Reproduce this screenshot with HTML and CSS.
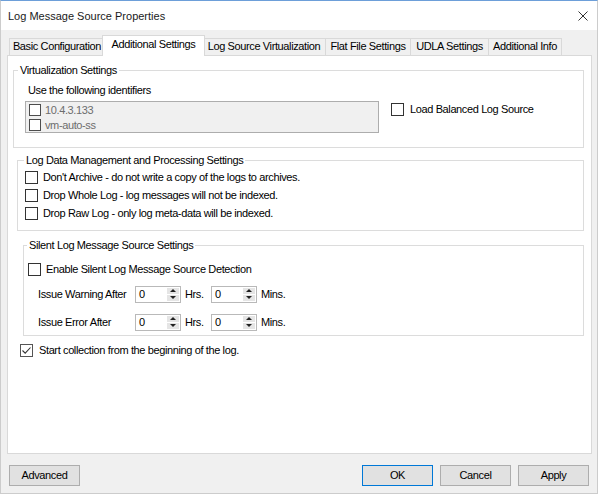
FILE: index.html
```html
<!DOCTYPE html>
<html>
<head>
<meta charset="utf-8">
<title>Log Message Source Properties</title>
<link rel="stylesheet" href="styles.css">
</head>
<body>
<div class="window">
  <div class="titlebar">
    <span class="title">Log Message Source Properties</span>
    <svg class="close" viewBox="0 0 10 10" width="10" height="10"><path d="M0.5 0.5 L9.5 9.5 M9.5 0.5 L0.5 9.5" stroke="#333" stroke-width="1" fill="none"/></svg>
  </div>
  <div class="tabs">
    <div class="tab tab-basic">Basic Configuration</div>
    <div class="tab tab-additional active">Additional Settings</div>
    <div class="tab tab-virt">Log Source Virtualization</div>
    <div class="tab tab-flat">Flat File Settings</div>
    <div class="tab tab-udla">UDLA Settings</div>
    <div class="tab tab-info">Additional Info</div>
  </div>
  <div class="panel">
    <div class="group g1">
      <div class="group-title">Virtualization Settings</div>
      <div class="g1-body">
        <div class="ident">
          <div class="ident-label">Use the following identifiers</div>
          <div class="listbox">
            <div class="item"><span class="cb-s"></span>10.4.3.133</div>
            <div class="item"><span class="cb-s"></span>vm-auto-ss</div>
          </div>
        </div>
        <div class="row lb"><span class="cb"></span><span class="lb-text">Load Balanced Log Source</span></div>
      </div>
    </div>
    <div class="group g2">
      <div class="group-title">Log Data Management and Processing Settings</div>
      <div class="rows">
        <div class="row"><span class="cb"></span>Don't Archive - do not write a copy of the logs to archives.</div>
        <div class="row"><span class="cb"></span>Drop Whole Log - log messages will not be indexed.</div>
        <div class="row"><span class="cb"></span>Drop Raw Log - only log meta-data will be indexed.</div>
      </div>
    </div>
    <div class="group g3">
      <div class="group-title">Silent Log Message Source Settings</div>
      <div class="row enable"><span class="cb"></span>Enable Silent Log Message Source Detection</div>
      <div class="spinrow first">
        <span class="spin-label">Issue Warning After</span>
        <div class="spin"><span class="spin-val">0</span><span class="spin-btns"><span class="up"></span><span class="down"></span></span></div>
        <span class="unit">Hrs.</span>
        <div class="spin"><span class="spin-val">0</span><span class="spin-btns"><span class="up"></span><span class="down"></span></span></div>
        <span class="unit">Mins.</span>
      </div>
      <div class="spinrow second">
        <span class="spin-label">Issue Error After</span>
        <div class="spin"><span class="spin-val">0</span><span class="spin-btns"><span class="up"></span><span class="down"></span></span></div>
        <span class="unit">Hrs.</span>
        <div class="spin"><span class="spin-val">0</span><span class="spin-btns"><span class="up"></span><span class="down"></span></span></div>
        <span class="unit">Mins.</span>
      </div>
    </div>
    <div class="row start"><span class="cb checked"><svg viewBox="0 0 11 11" width="11" height="11"><path d="M1.5 5.5 L4.2 8.2 L9.5 2.5" stroke="#333" stroke-width="1.1" fill="none"/></svg></span>Start collection from the beginning of the log.</div>
  </div>
  <div class="buttons">
    <button class="btn">Advanced</button>
    <div class="btn-group">
      <button class="btn btn-ok">OK</button>
      <button class="btn">Cancel</button>
      <button class="btn">Apply</button>
    </div>
  </div>
</div>
</body>
</html>
```
FILE: styles.css
```css
* { box-sizing: border-box; }
html, body { margin: 0; padding: 0; }
body {
  font-family: "Liberation Sans", Arial, sans-serif;
  font-size: 11px;
  letter-spacing: -0.38px;
  color: #000;
  background: #ffffff;
}
.window {
  width: 598px;
  height: 494px;
  background: #f0f0f0;
  border: 1px solid #cccccc;
  border-top-color: #6d9fd9;
}
.titlebar {
  height: 29px;
  background: #fff;
  display: flex;
  align-items: center;
  justify-content: space-between;
  padding: 0 9px 0 7px;
}
.title { letter-spacing: 0; font-size: 11px; color: #1a1a1a; }
.close { display: block; }

.tabs {
  display: flex;
  align-items: flex-end;
  height: 25px;
  padding: 5px 0 0 8px;
  position: relative;
  z-index: 1;
}
.tab {
  height: 17px;
  border: 1px solid #d9d9d9;
  border-bottom: 0;
  line-height: 15px;
  text-align: center;
  white-space: nowrap;
  background: #f0f0f0;
  margin-right: -1px;
}
.tab-basic { width: 96px; }
.tab-virt { width: 124px; }
.tab-flat { width: 86px; }
.tab-udla { width: 79px; }
.tab-info { width: 74px; }
.tab.active {
  width: 103px;
  height: 21px;
  margin: 0 -3px -1px -2px;
  background: #fff;
  padding-top: 1px;
  position: relative;
  z-index: 2;
}

.panel {
  margin-left: 6px;
  width: 585px;
  height: 399px;
  background: #fff;
  border: 1px solid #d9d9d9;
}

.group { border: 1px solid #dcdcdc; }
.group-title {
  display: block;
  width: fit-content;
  margin-top: -7px;
  line-height: 13px;
  background: #fff;
  padding: 0 2px;
}
.g1 { margin: 14px 7px 0 5px; height: 78px; }
.g1 .group-title { margin-left: 4px; }
.g2 { margin: 12px 7px 0 9px; height: 71px; }
.g2 .group-title { margin-left: 6px; }
.g3 { margin: 14px 7px 0 15px; height: 91px; }
.g3 .group-title { margin-left: 3px; }

.g1-body { display: flex; padding-left: 11px; }
.ident-label { margin-top: 7px; line-height: 13px; padding-left: 3px; }
.listbox {
  margin-top: 4px;
  width: 354px;
  height: 32px;
  border: 1px solid #adadad;
  background: #f0f0f0;
  padding-left: 3px;
}
.item {
  display: flex;
  align-items: center;
  height: 15px;
  color: #6d6d6d;
}
.cb-s {
  width: 12px;
  height: 12px;
  border: 1px solid #4d4d4d;
  background: #fff;
  margin-right: 4px;
  flex: none;
}

.row {
  display: flex;
  align-items: center;
  height: 18px;
  white-space: nowrap;
}
.cb {
  width: 13px;
  height: 13px;
  border: 1px solid #333;
  background: #fff;
  margin-right: 5px;
  flex: none;
  display: flex;
  align-items: center;
  justify-content: center;
}
.cb svg { display: block; }
.lb { margin: 23px 0 0 12px; }
.lb .cb { margin-right: 6px; }

.rows { margin-top: 1px; padding-left: 7px; }

.enable { margin-top: 8px; padding-left: 4px; }
.spinrow {
  display: flex;
  align-items: center;
  height: 20px;
  padding-left: 14px;
}
.spinrow.first { margin-top: 6px; }
.spinrow.second { margin-top: 8px; }
.spin-label { width: 97px; }
.spin {
  width: 46px;
  height: 17px;
  border: 1px solid #b9b9b9;
  background: #fff;
  display: flex;
}
.spin-val { flex: 1; padding-left: 3px; line-height: 15px; }
.spin-btns {
  width: 13px;
  display: flex;
  flex-direction: column;
  padding: 1px 1px 1px 0;
  gap: 1px;
}
.spin-btns span {
  flex: 1;
  background: #e5e5e5;
  display: flex;
  align-items: center;
  justify-content: center;
}
.spin-btns .up::before {
  content: "";
  border-left: 3px solid transparent;
  border-right: 3px solid transparent;
  border-bottom: 3px solid #222;
}
.spin-btns .down::before {
  content: "";
  border-left: 3px solid transparent;
  border-right: 3px solid transparent;
  border-top: 3px solid #222;
}
.unit { margin-left: 4px; width: 26px; }

.start { margin: 5px 0 0 12px; }
.start .cb { margin-right: 6px; border-color: #555; }

.buttons {
  display: flex;
  justify-content: space-between;
  padding: 0 8px;
  margin-top: 11px;
}
.btn-group { display: flex; gap: 7px; }
.btn {
  width: 71px;
  height: 21px;
  border: 1px solid #adadad;
  background: #e1e1e1;
  font-family: inherit;
  font-size: 11px;
  letter-spacing: -0.38px;
  color: #000;
  padding: 0;
  line-height: 19px;
  margin: 0;
}
.btn-ok { border-color: #0078d7; }
```
